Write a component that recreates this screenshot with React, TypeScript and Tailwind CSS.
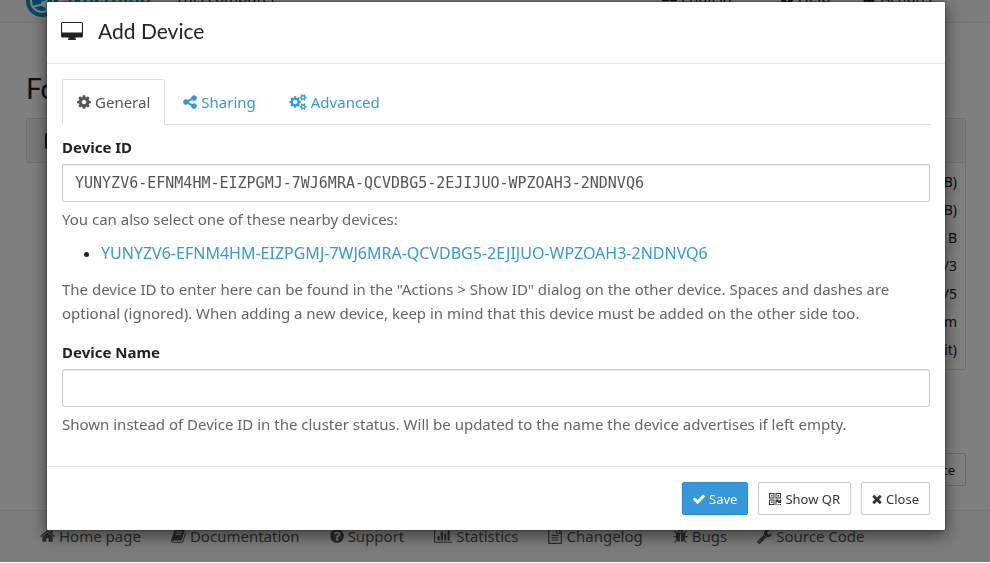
import type { ReactNode } from "react";
import { FaLanguage } from "react-icons/fa";

const PATHS = {
  cog: "M1152 896q0-106-75-181t-181-75-181 75-75 181 75 181 181 75 181-75 75-181zm512-109v222q0 12-8 23t-20 13l-185 28q-19 54-39 91 35 50 107 138 10 12 10 25t-9 23q-27 37-99 108t-94 71q-12 0-26-9l-138-108q-44 23-91 38-16 136-29 186-7 28-36 28h-222q-14 0-24.5-8.5t-11.5-21.5l-28-184q-49-16-90-37l-141 107q-10 9-25 9-14 0-25-11-126-114-165-168-7-10-7-23 0-12 8-23 15-21 51-66.5t54-70.5q-27-50-41-99l-183-27q-13-2-21-12.5t-8-23.5v-222q0-12 8-23t19-13l186-28q14-46 39-92-40-57-107-138-10-12-10-24 0-10 9-23 26-36 98.5-107.5t94.5-71.5q13 0 26 10l138 107q44-23 91-38 16-136 29-186 7-28 36-28h222q14 0 24.5 8.5t11.5 21.5l28 184q49 16 90 37l142-107q9-9 24-9 13 0 25 10 129 119 165 170 7 8 7 22 0 12-8 23-15 21-51 66.5t-54 70.5q26 50 41 98l183 28q13 2 21 12.5t8 23.5z",
  cogs: "M896 896q0-106-75-181t-181-75-181 75-75 181 75 181 181 75 181-75 75-181zm768 512q0-52-38-90t-90-38-90 38-38 90q0 53 37.5 90.5t90.5 37.5 90.5-37.5 37.5-90.5zm0-1024q0-52-38-90t-90-38-90 38-38 90q0 53 37.5 90.5t90.5 37.5 90.5-37.5 37.5-90.5zm-384 421v185q0 10-7 19.5t-16 10.5l-155 24q-11 35-32 76 34 48 90 115 7 11 7 20 0 12-7 19-23 30-82.5 89.5t-78.5 59.5q-11 0-21-7l-115-90q-37 19-77 31-11 108-23 155-7 24-30 24h-186q-11 0-20-7.5t-10-17.5l-23-153q-34-10-75-31l-118 89q-7 7-20 7-11 0-21-8-144-133-144-160 0-9 7-19 10-14 41-53t47-61q-23-44-35-82l-152-24q-10-1-17-9.5t-7-19.5v-185q0-10 7-19.5t16-10.5l155-24q11-35 32-76-34-48-90-115-7-11-7-20 0-12 7-20 22-30 82-89t79-59q11 0 21 7l115 90q34-18 77-32 11-108 23-154 7-24 30-24h186q11 0 20 7.5t10 17.5l23 153q34 10 75 31l118-89q8-7 20-7 11 0 21 8 144 133 144 160 0 8-7 19-12 16-42 54t-45 60q23 48 34 82l152 23q10 2 17 10.5t7 19.5zm640 533v140q0 16-149 31-12 27-30 52 51 113 51 138 0 4-4 7-122 71-124 71-8 0-46-47t-52-68q-20 2-30 2t-30-2q-14 21-52 68t-46 47q-2 0-124-71-4-3-4-7 0-25 51-138-18-25-30-52-149-15-149-31v-140q0-16 149-31 13-29 30-52-51-113-51-138 0-4 4-7 4-2 35-20t59-34 30-16q8 0 46 46.5t52 67.5q20-2 30-2t30 2q51-71 92-112l6-2q4 0 124 70 4 3 4 7 0 25-51 138 17 23 30 52 149 15 149 31zm0-1024v140q0 16-149 31-12 27-30 52 51 113 51 138 0 4-4 7-122 71-124 71-8 0-46-47t-52-68q-20 2-30 2t-30-2q-14 21-52 68t-46 47q-2 0-124-71-4-3-4-7 0-25 51-138-18-25-30-52-149-15-149-31v-140q0-16 149-31 13-29 30-52-51-113-51-138 0-4 4-7 4-2 35-20t59-34 30-16q8 0 46 46.5t52 67.5q20-2 30-2t30 2q51-71 92-112l6-2q4 0 124 70 4 3 4 7 0 25-51 138 17 23 30 52 149 15 149 31z",
  share: "M1344 1024q133 0 226.5 93.5t93.5 226.5-93.5 226.5-226.5 93.5-226.5-93.5-93.5-226.5q0-12 2-34l-360-180q-92 86-218 86-133 0-226.5-93.5t-93.5-226.5 93.5-226.5 226.5-93.5q126 0 218 86l360-180q-2-22-2-34 0-133 93.5-226.5t226.5-93.5 226.5 93.5 93.5 226.5-93.5 226.5-226.5 93.5q-126 0-218-86l-360 180q2 22 2 34t-2 34l360 180q92-86 218-86z",
  home: "M1472 992v480q0 26-19 45t-45 19h-384v-384h-256v384h-384q-26 0-45-19t-19-45v-480q0-1 .5-3t.5-3l575-474 575 474q1 2 1 6zm223-69l-62 74q-8 9-21 11h-3q-13 0-21-7l-692-577-692 577q-12 8-24 7-13-2-21-11l-62-74q-8-10-7-23.5t11-21.5l719-599q32-26 76-26t76 26l244 204v-195q0-14 9-23t23-9h192q14 0 23 9t9 23v408l219 182q10 8 11 21.5t-7 23.5z",
  question: "M1024 1376v-192q0-14-9-23t-23-9h-192q-14 0-23 9t-9 23v192q0 14 9 23t23 9h192q14 0 23-9t9-23zm256-672q0-88-55.5-163t-138.5-116-170-41q-243 0-371 213-15 24 8 42l132 100q7 6 19 6 16 0 25-12 53-68 86-92 34-24 86-24 48 0 85.5 26t37.5 59q0 38-20 61t-68 45q-63 28-115.5 86.5t-52.5 125.5v36q0 14 9 23t23 9h192q14 0 23-9t9-23q0-19 21.5-49.5t54.5-49.5q32-18 49-28.5t46-35 44.5-48 28-60.5 12.5-81zm384 192q0 209-103 385.5t-279.5 279.5-385.5 103-385.5-103-279.5-279.5-103-385.5 103-385.5 279.5-279.5 385.5-103 385.5 103 279.5 279.5 103 385.5z",
  file: "M1596 380q28 28 48 76t20 88v1152q0 40-28 68t-68 28h-1344q-40 0-68-28t-28-68v-1600q0-40 28-68t68-28h896q40 0 88 20t76 48zm-444-244v376h376q-10-29-22-41l-313-313q-12-12-41-22zm384 1528v-1024h-416q-40 0-68-28t-28-68v-416h-768v1536h1280zm-1024-864q0-14 9-23t23-9h704q14 0 23 9t9 23v64q0 14-9 23t-23 9h-704q-14 0-23-9t-9-23v-64zm736 224q14 0 23 9t9 23v64q0 14-9 23t-23 9h-704q-14 0-23-9t-9-23v-64q0-14 9-23t23-9h704zm0 256q14 0 23 9t9 23v64q0 14-9 23t-23 9h-704q-14 0-23-9t-9-23v-64q0-14 9-23t23-9h704z",
  bug: "M1696 960q0 26-19 45t-45 19h-224q0 171-67 290l208 209q19 19 19 45t-19 45q-18 19-45 19t-45-19l-198-197q-5 5-15 13t-42 28.5-65 36.5-82 29-97 13v-896h-128v896q-51 0-101.5-13.5t-87-33-66-39-43.5-32.5l-15-14-183 207q-20 21-48 21-24 0-43-16-19-18-20.5-44.5t15.5-46.5l202-227q-58-114-58-274h-224q-26 0-45-19t-19-45 19-45 45-19h224v-294l-173-173q-19-19-19-45t19-45 45-19 45 19l173 173h844l173-173q19-19 45-19t45 19 19 45-19 45l-173 173v294h224q26 0 45 19t19 45zm-480-576h-640q0-133 93.5-226.5t226.5-93.5 226.5 93.5 93.5 226.5z",
  wrench: "M448 1472q0-26-19-45t-45-19-45 19-19 45 19 45 45 19 45-19 19-45zm644-420l-682 682q-37 37-90 37-52 0-91-37l-106-108q-38-36-38-90 0-53 38-91l681-681q39 98 114.5 173.5t173.5 114.5zm634-435q0 39-23 106-47 134-164.5 217.5t-258.5 83.5q-185 0-316.5-131.5t-131.5-316.5 131.5-316.5 316.5-131.5q58 0 121.5 16.5t107.5 46.5q16 11 16 28t-16 28l-293 169v224l193 107q5-3 79-48.5t135.5-81 70.5-35.5q15 0 23.5 10t8.5 25z",
  book: "M1703 478q40 57 18 129l-275 906q-19 64-76.5 107.5t-122.5 43.5h-923q-77 0-148.5-53.5t-99.5-131.5q-24-67-2-127 0-4 3-27t4-37q1-8-3-21.5t-3-19.5q2-11 8-21t16.5-23.5 16.5-23.5q23-38 45-91.5t30-91.5q3-10 .5-30t-.5-28q3-11 17-28t17-23q21-36 42-92t25-90q1-9-2.5-32t.5-28q4-13 22-30.5t22-22.5q19-26 42.5-84.5t27.5-96.5q1-8-3-25.5t-2-26.5q2-8 9-18t18-23 17-21q8-12 16.5-30.5t15-35 16-36 19.5-32 26.5-23.5 36-11.5 47.5 5.5l-1 3q38-9 51-9h761q74 0 114 56t18 130l-274 906q-36 119-71.5 153.5t-128.5 34.5h-869q-27 0-38 15-11 16-1 43 24 70 144 70h923q29 0 56-15.5t35-41.5l300-987q7-22 5-57 38 15 59 43zm-1064 2q-4 13 2 22.5t20 9.5h608q13 0 25.5-9.5t16.5-22.5l21-64q4-13-2-22.5t-20-9.5h-608q-13 0-25.5 9.5t-16.5 22.5zm-83 256q-4 13 2 22.5t20 9.5h608q13 0 25.5-9.5t16.5-22.5l21-64q4-13-2-22.5t-20-9.5h-608q-13 0-25.5 9.5t-16.5 22.5z",
  chart: "M640 896v512h-256v-512h256zm384-512v1024h-256v-1024h256zm1024 1152v128h-2048v-1536h128v1408h1920zm-640-896v768h-256v-768h256zm384-384v1152h-256v-1152h256z",
  check: "M1671 566q0 40-28 68l-724 724-136 136q-28 28-68 28t-68-28l-136-136-362-362q-28-28-28-68t28-68l136-136q28-28 68-28t68 28l294 295 656-657q28-28 68-28t68 28l136 136q28 28 28 68z",
  times: "M1490 1322q0 40-28 68l-136 136q-28 28-68 28t-68-28l-294-294-294 294q-28 28-68 28t-68-28l-136-136q-28-28-28-68t28-68l294-294-294-294q-28-28-28-68t28-68l136-136q28-28 68-28t68 28l294 294 294-294q28-28 68-28t68 28l136 136q28 28 28 68t-28 68l-294 294 294 294q28 28 28 68z",
};

type IconName = keyof typeof PATHS;

function Icon({ name, box = "128 0 1536 1792", className = "h-4 w-[14px]" }: { name: IconName; box?: string; className?: string }) {
  return (
    <svg viewBox={box} fill="currentColor" aria-hidden="true" className={`shrink-0 ${className}`}>
      <path d={PATHS[name]} />
    </svg>
  );
}

function DesktopIcon() {
  return (
    <svg viewBox="0 0 22 18" fill="currentColor" aria-hidden="true" className="h-[18px] w-[22px] shrink-0">
      <path fillRule="evenodd" d="M1.500 0h19A1.500 1.500 0 0 1 22 1.500v12.500a1.500 1.500 0 0 1-1.500 1.500H14.500V17q.5.2.5 1H7q0-.8.5-1V15.500H1.500A1.500 1.500 0 0 1 0 14V1.500A1.500 1.500 0 0 1 1.500 0zM1.100 1.100V10.500H20.900V1.100z" />
    </svg>
  );
}

function QrIcon() {
  return (
    <svg viewBox="0 0 12 12" fill="currentColor" aria-hidden="true" className="h-3 w-3 shrink-0">
      <path fillRule="evenodd" d="M0 0h5.500v5.500H0zM1 1v3.500h3.500V1zM6.500 0H12v5.500H6.500zM7.500 1v3.500H11V1zM0 6.500h5.500V12H0zM1 7.500V11h3.500V7.500zM2 2h1.500v1.500H2zM8.500 2H10v1.500H8.500zM2 8.500h1.500V10H2zM6.500 6.500h3v1h1.500v-1h1V10H9V9H7.500v3h-1zM8.500 11h1v1h-1zM10.500 11H12v1h-1.500z" />
    </svg>
  );
}

function Logo() {
  return (
    <svg viewBox="0 0 32 32" aria-hidden="true" className="h-8 w-8">
      <circle cx="16" cy="16" r="16" fill="#0891d1" />
      <circle cx="16" cy="16" r="11" fill="none" stroke="#fff" strokeWidth="2" />
      <path d="M18 19 6 22M18 19l8-11M18 19l4 7" stroke="#fff" strokeWidth="2" />
      <circle cx="18" cy="19" r="3" fill="#fff" />
    </svg>
  );
}

function Caret() {
  return <span className="ml-1 border-x-4 border-t-4 border-x-transparent border-t-current" />;
}

const FOOTER_LINKS: { name: IconName; label: string; box?: string; size?: string }[] = [
  { name: "home", label: "Home page", box: "64 0 1664 1792", size: "h-4 w-[15px]" },
  { name: "book", label: "Documentation", box: "64 0 1664 1792", size: "h-4 w-[15px]" },
  { name: "question", label: "Support" },
  { name: "chart", label: "Statistics", box: "0 0 2048 1792", size: "h-4 w-[18px]" },
  { name: "file", label: "Changelog" },
  { name: "bug", label: "Bugs", box: "64 0 1664 1792", size: "h-4 w-[15px]" },
  { name: "wrench", label: "Source Code", box: "64 0 1664 1792", size: "h-4 w-[15px]" },
];

const STATUS = [
  ["download", "B)"],
  ["upload", "B)"],
  ["local", "B"],
  ["listeners", "3/3"],
  ["discovery", "4/5"],
  ["uptime", "m"],
  ["version", "bit)"],
];

function Page() {
  return (
    <div className="flex h-full flex-col bg-white">
      <nav className="-mt-[28px] flex h-[51px] shrink-0 items-center border-b border-[#e7e7e7] bg-[#f8f8f8] px-[26px]">
        <div className="flex items-center gap-1 pt-2 text-lg font-bold leading-8 text-[#0891d1]">
          <Logo />
          <span className="pb-2">Syncthing</span>
        </div>
        <span className="ml-6">This computer</span>
        <div className="ml-auto flex gap-8 pr-4">
          <span className="flex items-center gap-1"><FaLanguage aria-hidden="true" />English<Caret /></span>
          <span className="flex items-center gap-1"><Icon name="question" />Help</span>
          <span className="flex items-center gap-1"><Icon name="cog" />Actions<Caret /></span>
        </div>
      </nav>
      <main className="grid grow grid-cols-2 gap-[30px] pl-[26px] pr-6 pt-[45px]">
        <section>
          <h3 className="font-[Lato,sans-serif] text-[28px] leading-10">Folders</h3>
          <div className="mt-[10px] flex h-[45px] items-center rounded-xs border border-[#ddd] bg-[#f5f5f5] pl-[18px]">
            <span className="size-4 rounded-xs bg-[#222]" />
          </div>
        </section>
        <section className="pt-[50px]">
          <div className="rounded-xs border border-[#ddd]">
            <div className="h-11 border-b border-[#ddd] bg-[#f5f5f5]" />
            <table className="m-[5px] w-[calc(100%-10px)]">
              <tbody>
                {STATUS.map(([key, value]) => (
                  <tr key={key} className="h-7 odd:bg-[#f9f9f9]">
                    <td className="pr-[3px] text-right text-sm">{value}</td>
                  </tr>
                ))}
              </tbody>
            </table>
          </div>
          <div className="mt-[83px] flex justify-end">
            <button className="h-[33px] rounded-xs border border-[#ccc] px-[10px] text-[13px]">Device</button>
          </div>
        </section>
      </main>
      <footer className="flex h-[52px] shrink-0 gap-[30px] border-t border-[#e7e7e7] bg-[#f8f8f8] pl-10 pt-[13px] text-[#555]">
        {FOOTER_LINKS.map((link) => (
          <a key={link.label} href="#" className="flex h-6 items-center gap-1 whitespace-nowrap">
            <Icon name={link.name} box={link.box} className={link.size} />
            {link.label}
          </a>
        ))}
      </footer>
    </div>
  );
}

function Tab({ active = false, children }: { active?: boolean; children: ReactNode }) {
  const look = active ? "border-[#ddd] border-b-white bg-white text-[#555]" : "border-transparent text-[#3498db]";
  return (
    <button role="tab" aria-selected={active} className={`-mb-px flex h-[46px] items-center gap-1 rounded-t-xs border px-[14px] ${look}`}>
      {children}
    </button>
  );
}

const ID = "YUNYZV6-EFNM4HM-EIZPGMJ-7WJ6MRA-QCVDBG5-2EJIJUO-WPZOAH3-2NDNVQ6";
const INPUT = "mt-[5px] block h-[38px] w-full rounded-xs border border-[#ccc] px-3 text-[#555] shadow-[inset_0_1px_1px_rgba(0,0,0,0.075)] outline-none";
const BUTTON = "flex h-[33px] items-center gap-1 rounded-xs border px-[10px] text-[13px]";

function AddDeviceDialog() {
  return (
    <div role="dialog" aria-labelledby="dialog-title" className="rounded-xs border border-black/20 bg-white bg-clip-padding shadow-[0_5px_15px_rgba(0,0,0,0.5)]">
      <header className="flex h-[62px] items-center gap-[15px] border-b border-[#e5e5e5] px-[14px] pb-[3px]">
        <DesktopIcon />
        <h4 id="dialog-title" className="font-[Lato,sans-serif] text-[21px] leading-6">Add Device</h4>
      </header>
      <div className="px-[15px] pb-[30px] pt-[15px]">
        <div role="tablist" className="flex gap-[3px] border-b border-[#ddd]">
          <Tab active><Icon name="cog" />General</Tab>
          <Tab><Icon name="share" />Sharing</Tab>
          <Tab><Icon name="cogs" box="0 0 1920 1792" className="h-4 w-[18px]" />Advanced</Tab>
        </div>
        <label htmlFor="device-id" className="mt-[10px] block font-bold">Device ID</label>
        <input id="device-id" defaultValue={ID} className={`${INPUT} font-['DejaVu_Sans_Mono',monospace] text-[15px]`} />
        <p className="mt-[5px] text-[#646464]">You can also select one of these nearby devices:</p>
        <ul className="mb-3 mt-[10px] list-disc pl-[39px]">
          <li><a href="#" className="text-base leading-6 text-[#3498db]">{ID}</a></li>
        </ul>
        <p className="text-[#646464]">
          The device ID to enter here can be found in the "Actions &gt; Show ID" dialog on the other device. Spaces and dashes are optional (ignored). When adding a new device, keep in mind that this device must be added on the other side too.
        </p>
        <label htmlFor="device-name" className="mt-[15px] block font-bold">Device Name</label>
        <input id="device-name" className={INPUT} />
        <p className="mt-[5px] text-[#646464]">Shown instead of Device ID in the cluster status. Will be updated to the name the device advertises if left empty.</p>
      </div>
      <footer className="flex justify-end gap-[10px] border-t border-[#e5e5e5] px-[15px] py-[15px]">
        <button className={`${BUTTON} border-[#258cd1] bg-[#3498db] text-white`}><Icon name="check" className="h-[14px] w-3" />Save</button>
        <button className={`${BUTTON} border-[#ccc] text-[#333]`}><QrIcon />Show QR</button>
        <button className={`${BUTTON} border-[#ccc] text-[#333]`}><Icon name="times" box="240 0 1312 1792" className="h-[14px] w-[10px]" />Close</button>
      </footer>
    </div>
  );
}

export default function App() {
  return (
    <div className="h-screen overflow-hidden pb-px font-['Noto_Sans','Open_Sans',sans-serif] text-[15px] leading-6 text-[#222]">
      <Page />
      <div className="fixed inset-x-0 bottom-px top-0 overflow-hidden bg-black/50 pl-[46px] pr-11 pt-px">
        <AddDeviceDialog />
      </div>
    </div>
  );
}
